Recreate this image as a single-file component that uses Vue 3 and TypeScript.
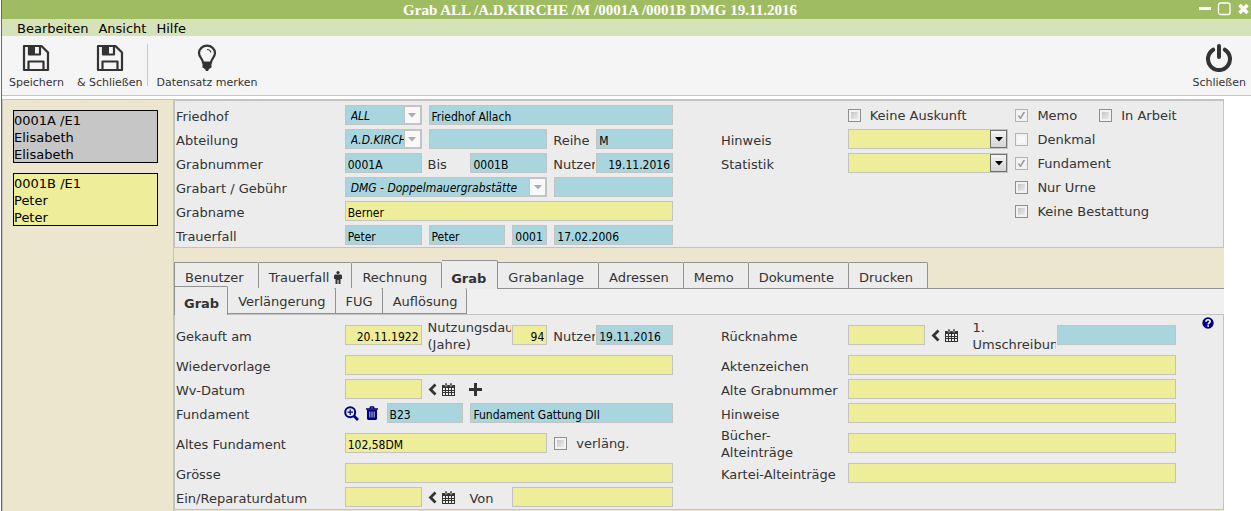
<script setup lang="ts">
import { reactive, ref } from 'vue'

type Kind = 'label' | 'text' | 'select' | 'check' | 'date' | 'add' | 'lookup'

interface Cell {
  kind: Kind
  row: number
  col: number
  span: number
  id?: string
  text?: string
  lines?: string[]
  aria?: string
  value?: string
  tone?: 'blue' | 'yellow'
  right?: boolean
  disabled?: boolean
  checked?: boolean
}

const label = (row: number, col: number, span: number, text: string, id: string): Cell =>
  ({ kind: 'label', row, col, span, id, lines: text.split('|') })

const field = (row: number, col: number, span: number, id: string, aria: string, value = '', tone: 'blue' | 'yellow' = 'yellow', right = false): Cell =>
  ({ kind: 'text', row, col, span, id, aria, value, tone, right })

const choice = (row: number, col: number, span: number, id: string, aria: string, value = '', disabled = false): Cell =>
  ({ kind: 'select', row, col, span, id, aria, value, disabled, tone: disabled ? 'blue' : 'yellow' })

const check = (row: number, col: number, span: number, id: string, text: string, checked = false, disabled = false): Cell =>
  ({ kind: 'check', row, col, span, id, text, checked, disabled })

const grave = reactive<Cell[]>([
  label(1, 1, 4, 'Friedhof', 'friedhof'),
  choice(1, 5, 2, 'friedhof', 'Friedhof', 'ALL', true),
  field(1, 7, 6, 'friedhof-name', 'Friedhof Name', 'Friedhof Allach', 'blue'),
  label(2, 1, 4, 'Abteilung', 'abteilung'),
  choice(2, 5, 2, 'abteilung', 'Abteilung', 'A.D.KIRCHE', true),
  field(2, 7, 3, 'abteilung-name', 'Abteilung Name', '', 'blue'),
  label(2, 10, 1, 'Reihe', 'reihe'),
  field(2, 11, 2, 'reihe', 'Reihe', 'M', 'blue'),
  label(3, 1, 4, 'Grabnummer', 'nummer'),
  field(3, 5, 2, 'nummer', 'Grabnummer', '0001A', 'blue'),
  label(3, 7, 1, 'Bis', 'nummer-bis'),
  field(3, 8, 2, 'nummer-bis', 'Bis', '0001B', 'blue'),
  label(3, 10, 1, 'Nutzer', 'nutzer'),
  field(3, 11, 2, 'nutzer', 'Nutzer', '19.11.2016', 'blue', true),
  label(4, 1, 4, 'Grabart / Gebühr', 'grabart'),
  choice(4, 5, 5, 'grabart', 'Grabart', 'DMG - Doppelmauergrabstätte', true),
  field(4, 10, 3, 'gebuehr', 'Gebühr', '', 'blue'),
  label(5, 1, 4, 'Grabname', 'grabname'),
  field(5, 5, 8, 'grabname', 'Grabname', 'Berner'),
  label(6, 1, 4, 'Trauerfall', 'trauerfall'),
  field(6, 5, 2, 'trauerfall', 'Trauerfall', 'Peter', 'blue'),
  field(6, 7, 2, 'trauerfall-vorname', 'Vorname', 'Peter', 'blue'),
  field(6, 9, 1, 'trauerfall-nr', 'Nummer', '0001', 'blue'),
  field(6, 10, 3, 'trauerfall-datum', 'Datum', '17.02.2006', 'blue'),
  check(1, 17, 4, 'auskunft', 'Keine Auskunft'),
  label(2, 14, 3, 'Hinweis', 'hinweis'),
  choice(2, 17, 4, 'hinweis', 'Hinweis'),
  label(3, 14, 3, 'Statistik', 'statistik'),
  choice(3, 17, 4, 'statistik', 'Statistik'),
  check(1, 21, 2, 'memo', 'Memo', true, true),
  check(1, 23, 3, 'arbeit', 'In Arbeit'),
  check(2, 21, 4, 'denkmal', 'Denkmal', false, true),
  check(3, 21, 4, 'fundament-da', 'Fundament', true, true),
  check(4, 21, 4, 'urne', 'Nur Urne'),
  check(5, 21, 4, 'bestattung', 'Keine Bestattung'),
])

const details = reactive<Cell[]>([
  label(1, 1, 4, 'Gekauft am', 'gekauft'),
  field(1, 5, 2, 'gekauft', 'Gekauft am', '20.11.1922', 'yellow', true),
  label(1, 7, 2, 'Nutzungsdauer|(Jahre)', 'dauer'),
  field(1, 9, 1, 'dauer', 'Nutzungsdauer', '94', 'yellow', true),
  label(1, 10, 1, 'Nutzer', 'nutzer-ende'),
  field(1, 11, 2, 'nutzer-ende', 'Nutzer', '19.11.2016', 'blue'),
  label(2, 1, 4, 'Wiedervorlage', 'vorlage'),
  field(2, 5, 8, 'vorlage', 'Wiedervorlage'),
  label(3, 1, 4, 'Wv-Datum', 'wv'),
  field(3, 5, 2, 'wv', 'Wv-Datum'),
  { kind: 'date', row: 3, col: 7, span: 1 },
  { kind: 'add', row: 3, col: 8, span: 1 },
  label(4, 1, 4, 'Fundament', 'fundament'),
  { kind: 'lookup', row: 4, col: 5, span: 1 },
  field(4, 6, 2, 'fundament', 'Fundament', 'B23', 'blue'),
  field(4, 8, 5, 'fundament-name', 'Fundament Gattung', 'Fundament Gattung DII', 'blue'),
  label(5, 1, 4, 'Altes Fundament', 'altes'),
  field(5, 5, 5, 'altes', 'Altes Fundament', '102,58DM'),
  check(5, 10, 3, 'verlaeng', 'verläng.'),
  label(6, 1, 4, 'Grösse', 'groesse'),
  field(6, 5, 8, 'groesse', 'Grösse'),
  label(7, 1, 4, 'Ein/Reparaturdatum', 'reparatur'),
  field(7, 5, 2, 'reparatur', 'Ein/Reparaturdatum'),
  { kind: 'date', row: 7, col: 7, span: 1 },
  label(7, 8, 1, 'Von', 'von'),
  field(7, 9, 4, 'von', 'Von'),
  label(1, 14, 3, 'Rücknahme', 'ruecknahme'),
  field(1, 17, 2, 'ruecknahme', 'Rücknahme'),
  { kind: 'date', row: 1, col: 19, span: 1 },
  label(1, 20, 2, '1.|Umschreibung', 'umschreibung'),
  field(1, 22, 3, 'umschreibung', '1. Umschreibung', '', 'blue'),
  label(2, 14, 3, 'Aktenzeichen', 'akte'),
  field(2, 17, 8, 'akte', 'Aktenzeichen'),
  label(3, 14, 3, 'Alte Grabnummer', 'alte-nummer'),
  field(3, 17, 8, 'alte-nummer', 'Alte Grabnummer'),
  label(4, 14, 3, 'Hinweise', 'hinweise'),
  field(4, 17, 8, 'hinweise', 'Hinweise'),
  label(5, 14, 3, 'Bücher-|Alteinträge', 'buecher'),
  field(5, 17, 8, 'buecher', 'Bücher-Alteinträge'),
  label(6, 14, 3, 'Kartei-Alteinträge', 'kartei'),
  field(6, 17, 8, 'kartei', 'Kartei-Alteinträge'),
])

const sections = { grave, details }
const menus = ['Bearbeiten', 'Ansicht', 'Hilfe']
const tabs = ['Benutzer', 'Trauerfall', 'Rechnung', 'Grab', 'Grabanlage', 'Adressen', 'Memo', 'Dokumente', 'Drucken']
const subtabs = ['Grab', 'Verlängerung', 'FUG', 'Auflösung']
const activeTab = ref('Grab')
const activeSubtab = ref('Grab')
const cards = [
  { place: '0001A /E1', name: 'Elisabeth', second: 'Elisabeth' },
  { place: '0001B /E1', name: 'Peter', second: 'Peter' },
]
const selectedCard = ref(1)
const place = (c: Cell) => [`r${c.row}`, `c${c.col}`, `s${c.span}`]
</script>

<template>
  <div class="window">
    <header class="titlebar">
      <h1>Grab ALL /A.D.KIRCHE /M /0001A /0001B DMG 19.11.2016</h1>
      <div class="window-buttons">
        <button type="button" aria-label="Minimieren"><svg width="14" height="14" viewBox="0 0 14 14"><path d="M1 5h12v3H1z" fill="#fff" /></svg></button>
        <button type="button" aria-label="Maximieren"><svg width="14" height="14" viewBox="0 0 14 14"><rect x="1.5" y="1" width="11.500" height="11.500" rx="2" fill="none" stroke="#fff" stroke-width="1.3" /></svg></button>
        <button type="button" aria-label="Fenster schließen"><svg width="14" height="14" viewBox="0 0 14 14"><path d="M3.500 3l8 8M11.500 3l-8 8" stroke="#fff" stroke-width="3.600" /></svg></button>
      </div>
    </header>

    <nav class="menubar">
      <button v-for="m in menus" :key="m" type="button">{{ m }}</button>
    </nav>

    <div class="toolbar">
      <button type="button" class="tool">
        <svg width="28" height="28" viewBox="0 0 28 28" fill="none" stroke="#333" stroke-width="2.200" stroke-linejoin="round"><path d="M2 2h17.500l6.500 6.500V26H2z" /><path d="M6.500 26v-8.500h15V26" /><path d="M7 2v8.500h11V2" /><path d="M7 2h6v8H7z" fill="#333" stroke="none" /></svg>
        <span>Speichern</span>
      </button>
      <button type="button" class="tool">
        <svg width="28" height="28" viewBox="0 0 28 28" fill="none" stroke="#333" stroke-width="2.200" stroke-linejoin="round"><path d="M2 2h17.500l6.500 6.500V26H2z" /><path d="M6.500 26v-8.500h15V26" /><path d="M7 2v8.500h11V2" /><path d="M7 2h6v8H7z" fill="#333" stroke="none" /></svg>
        <span>&amp; Schließen</span>
      </button>
      <i class="divider"></i>
      <button type="button" class="tool">
        <svg width="28" height="28" viewBox="0 0 28 28" fill="none" stroke="#333"><path d="M10 18.500c0-3.500-4-5-4-9.500a8 7.300 0 0 1 16 0c0 4.500-4 6-4 9.500z" stroke-width="2.200" /><path d="M14 5.500c2 0 3.600 1.300 3.800 3" stroke-width="1.200" /><path d="M9.500 18h9v5.500l-2.500 1.500-1 2h-2l-1-2-2.500-1.500z" fill="#333" stroke="none" /></svg>
        <span>Datensatz merken</span>
      </button>
      <button type="button" class="tool tool-end">
        <svg width="28" height="28" viewBox="0 0 28 28" fill="none" stroke="#333" stroke-width="4" stroke-linecap="round"><path d="M8.200 5.700a11 11 0 1 0 11.600 0" /><path d="M14 2v11" /></svg>
        <span>Schließen</span>
      </button>
    </div>

    <div class="body">
      <aside class="sidebar">
        <button v-for="(c, i) in cards" :key="c.place" type="button" class="card" :class="{ selected: i === selectedCard }" @click="selectedCard = i">
          <span>{{ c.place }}</span><span>{{ c.name }}</span><span>{{ c.second }}</span>
        </button>
      </aside>

      <main class="main">
        <template v-for="(cells, name) in sections" :key="name">
          <template v-if="name === 'details'">
            <div class="tabs" role="tablist">
              <button v-for="t in tabs" :key="t" type="button" role="tab" :aria-selected="t === activeTab" :class="{ active: t === activeTab, marked: t === 'Trauerfall' }" @click="activeTab = t">
                {{ t }}
                <svg v-if="t === 'Trauerfall'" width="8" height="13" viewBox="0 0 8 13" fill="#333"><circle cx="4" cy="1.600" r="1.600" /><path d="M1 3.500h6l1 1V8H6.500v5h-2V9h-1v4h-2V8H0V4.500z" /></svg>
              </button>
            </div>
            <div class="tabs subtabs" role="tablist">
              <button v-for="t in subtabs" :key="t" type="button" role="tab" :aria-selected="t === activeSubtab" :class="{ active: t === activeSubtab }" @click="activeSubtab = t">{{ t }}</button>
            </div>
          </template>

          <section class="panel" :class="name">
            <template v-for="(c, i) in cells" :key="i">
              <label v-if="c.kind === 'label'" class="label" :class="place(c)" :for="c.id"><span v-for="l in c.lines" :key="l">{{ l }}</span></label>
              <input v-else-if="c.kind === 'text'" :id="c.id" v-model="c.value" type="text" class="field" :class="[place(c), c.tone, { right: c.right }]" :aria-label="c.aria" />
              <div v-else-if="c.kind === 'select'" class="combo" :class="[place(c), c.tone]">
                <select :id="c.id" v-model="c.value" :disabled="c.disabled" :aria-label="c.aria"><option :value="c.value">{{ c.value }}</option></select>
                <span class="arrow" aria-hidden="true"><svg width="8" height="5" viewBox="0 0 8 5"><path d="M0 0h8L4 4.500z" fill="currentColor" /></svg></span>
              </div>
              <label v-else-if="c.kind === 'check'" class="check" :class="place(c)"><input :id="c.id" v-model="c.checked" type="checkbox" :disabled="c.disabled" /><span>{{ c.text }}</span></label>
              <div v-else-if="c.kind === 'date'" class="icons" :class="place(c)">
                <button type="button" aria-label="Datum zurück"><svg width="9" height="13" viewBox="0 0 9 13"><path d="M7.500 1.500l-5 5 5 5" fill="none" stroke="#333" stroke-width="2.800" /></svg></button>
                <button type="button" aria-label="Kalender"><svg width="13" height="13" viewBox="0 0 13 13"><path d="M0 2h13v11H0z" fill="#333" /><path d="M3 0h2v3H3zM8 0h2v3H8z" fill="#333" stroke="#ececec" stroke-width=".5" /><path d="M1 5h2v2H1zM4 5h2v2H4zM7 5h2v2H7zM10 5h2v2h-2zM1 8h2v1H1zM4 8h2v1H4zM7 8h2v1H7zM10 8h2v1h-2zM1 10h2v2H1zM4 10h2v2H4zM7 10h2v2H7zM10 10h2v2h-2z" fill="#ececec" /></svg></button>
              </div>
              <div v-else-if="c.kind === 'add'" class="icons" :class="place(c)">
                <button type="button" aria-label="Hinzufügen"><svg width="13" height="13" viewBox="0 0 13 13"><path d="M5 0h3v5h5v3H8v5H5V8H0V5h5z" fill="#333" /></svg></button>
              </div>
              <div v-else class="icons lookup" :class="place(c)">
                <button type="button" aria-label="Suchen"><svg width="15" height="15" viewBox="0 0 15 15" fill="none" stroke="#000080"><circle cx="6.200" cy="6.200" r="5" stroke-width="2" /><path d="M10 10l4 4" stroke-width="2.600" /><path d="M3.500 6.200H9M6.200 3.500V9" stroke-width="1.200" /></svg></button>
                <button type="button" aria-label="Löschen"><svg width="12" height="14" viewBox="0 0 12 14"><path d="M0 3h12M4 3l.5-2h3L8 3" fill="none" stroke="#000080" stroke-width="1.500" /><path d="M1 3.500h10V13l-1 1H2l-1-1z" fill="#000080" /><path d="M3.800 5.500v6M6 5.500v6M8.200 5.500v6" stroke="#c4c4da" stroke-width="1" /></svg></button>
              </div>
            </template>
            <button v-if="name === 'details'" type="button" class="help" aria-label="Hilfe zum Formular"><svg width="12" height="12" viewBox="0 0 12 12"><circle cx="6" cy="6" r="5.700" fill="#000080" /><path d="M4 4.700c0-2.600 4.100-2.500 4.100-.2C8.100 6 6.200 5.900 6.200 7.400" fill="none" stroke="#fff" stroke-width="1.600" /><path d="M5.300 8.300h1.700v1.500H5.300z" fill="#fff" /></svg></button>
          </section>
        </template>
      </main>
    </div>
  </div>
</template>

<style>
body { margin: 0; background: #fff; }
</style>

<style scoped>
* { box-sizing: border-box; }
button { margin: 0; padding: 0; border: 0; background: none; font: inherit; color: inherit; cursor: pointer; }
svg { display: block; flex: none; }

.window {
  display: flex;
  flex-direction: column;
  min-height: 100vh;
  margin-left: 1px;
  border-left: 1px solid #66666e;
  font: 13px/17px "DejaVu Sans", Verdana, sans-serif;
  color: #333;
}
.titlebar { display: flex; align-items: center; height: 19px; background: #9fbc62; color: #fff; }
.titlebar h1 { flex: 1; margin: 0; padding-top: 1px; text-align: center; font: bold 15px/18px "Liberation Serif", "Times New Roman", serif; }
.window-buttons { display: flex; gap: 5px; padding: 0 1px 2px 0; }
.menubar { display: flex; gap: 10px; height: 17px; padding: 1px 0 0 15px; background: #d6e3b8; color: #000; }
.toolbar { display: flex; height: 60px; padding: 8px 5px 0 7px; background: #f5f5f5; border-bottom: 1px solid #c4c6c6; }
.tool { display: flex; flex-direction: column; align-items: center; gap: 4px; height: 46px; margin-right: 13px; font-size: 11px; line-height: 14px; }
.tool-end { margin: 0 0 0 auto; }
.divider { width: 1px; height: 42px; margin: 0 9px 0 -9px; background: #c8c8c8; }

.body { display: flex; flex: 1; padding: 3px 27px 0 0; }
.sidebar { display: flex; flex-direction: column; flex: none; gap: 10px; width: 172px; padding: 10px 15px 0 10px; border: 1px solid #c6c4bc; border-bottom: 0; background: #ece6cf; }
.card { display: flex; flex-direction: column; align-items: flex-start; height: 53px; padding-top: 1px; border: 1px solid #000; background: #c6c6c6; color: #000; }
.card.selected { background: #eeed99; }
.main { flex: 1; min-width: 0; background: #ece6cf; }

.panel {
  display: grid;
  grid-template-columns: repeat(25, minmax(0, 1fr));
  grid-auto-rows: minmax(24px, auto);
  align-items: center;
  column-gap: 7px;
  padding: 2px 5px 0 2px;
  border: 1px solid #c3c3c3;
  background: #ececec;
}
.grave { border-top-width: 2px; }
.label { display: flex; flex-direction: column; margin: 0 -6px 0 -1px; padding-top: 2px; overflow: hidden; white-space: nowrap; }
.field { width: 100%; height: 20px; padding: 3px 2px 0; border: 1px solid #c3c3c3; border-radius: 0; outline: 0; color: #000; font: 12px/15px "DejaVu Sans Condensed", "Noto Sans", sans-serif; }
.blue { background: #a9d6de; }
.yellow { background: #eeed99; }
.right { text-align: right; }
.combo { position: relative; height: 20px; border: 1px solid #c3c3c3; }
.combo select { display: block; appearance: none; width: 100%; height: 18px; padding: 3px 17px 0 5px; border: 0; border-radius: 0; outline: 0; background: none; color: #000; opacity: 1; font: italic 12px/15px "DejaVu Sans Condensed", "Noto Sans", sans-serif; }
.arrow { position: absolute; top: 0; right: 0; display: flex; align-items: center; justify-content: center; width: 17px; height: 18px; border: 1px solid #c3c3c3; background: #f8f8f8; color: #aaa; pointer-events: none; }
.combo.yellow .arrow { border-color: #707070; background: linear-gradient(#f4f4f4, #d4d4d4); color: #000; }

.check { display: flex; align-items: center; gap: 9px; white-space: nowrap; }
.check input { flex: none; appearance: none; width: 13px; height: 13px; margin: 1px 0 0; border: 1px solid #8e8f8f; background: linear-gradient(135deg, #b8bcc2, #f6f6f6); box-shadow: inset 0 0 0 2px #f2f2f2; }
.check input:disabled { border-color: #b4b4b4; background: #f8f8f8; }
.check input:checked { background: #f4f4f4 url("data:image/svg+xml,%3Csvg xmlns='http://www.w3.org/2000/svg' viewBox='0 0 11 11'%3E%3Cpath d='M2.500 5.500l2 3 4-7' fill='none' stroke='%23a0a0a0' stroke-width='1.700'/%3E%3C/svg%3E"); }
.icons { display: flex; align-items: center; gap: 5px; margin-left: -1px; }
.lookup { gap: 7px; }
.help { grid-area: 1 / 25; align-self: start; justify-self: end; margin-right: 4px; }

.tabs { display: flex; align-items: flex-end; height: 26px; margin-top: 15px; border-bottom: 1px solid #929292; }
.tabs button { display: flex; align-items: center; gap: 5px; height: 26px; padding: 4px 14px 0 10px; border: 1px solid #929292; border-left: 0; border-bottom: 0; border-radius: 0 2px 0 0; background: #ececec; white-space: nowrap; }
.tabs button:first-child { border-left: 1px solid #929292; }
.tabs .marked { padding-right: 9px; }
.tabs .active { height: 29px; margin-bottom: -1px; padding: 7px 11px 0 9px; font-weight: bold; }
.subtabs { margin-top: 0; border-bottom-color: #c3c3c3; background: #f0f0f0; }
.subtabs button { padding: 2px 9px 0 10px; border-top: 0; border-bottom: 1px solid #929292; }
.subtabs .active { padding: 4px 8px 0 9px; border-top: 1px solid #929292; border-bottom: 0; }
.details { border-top: 0; }

.r1 { grid-row: 1; } .r2 { grid-row: 2; } .r3 { grid-row: 3; } .r4 { grid-row: 4; }
.r5 { grid-row: 5; } .r6 { grid-row: 6; } .r7 { grid-row: 7; }
.c1 { grid-column-start: 1; } .c5 { grid-column-start: 5; } .c6 { grid-column-start: 6; }
.c7 { grid-column-start: 7; } .c8 { grid-column-start: 8; } .c9 { grid-column-start: 9; }
.c10 { grid-column-start: 10; } .c11 { grid-column-start: 11; } .c14 { grid-column-start: 14; }
.c17 { grid-column-start: 17; } .c19 { grid-column-start: 19; } .c20 { grid-column-start: 20; }
.c21 { grid-column-start: 21; } .c22 { grid-column-start: 22; } .c23 { grid-column-start: 23; }
.s1 { grid-column-end: span 1; } .s2 { grid-column-end: span 2; } .s3 { grid-column-end: span 3; }
.s4 { grid-column-end: span 4; } .s5 { grid-column-end: span 5; } .s6 { grid-column-end: span 6; }
.s8 { grid-column-end: span 8; }
</style>
